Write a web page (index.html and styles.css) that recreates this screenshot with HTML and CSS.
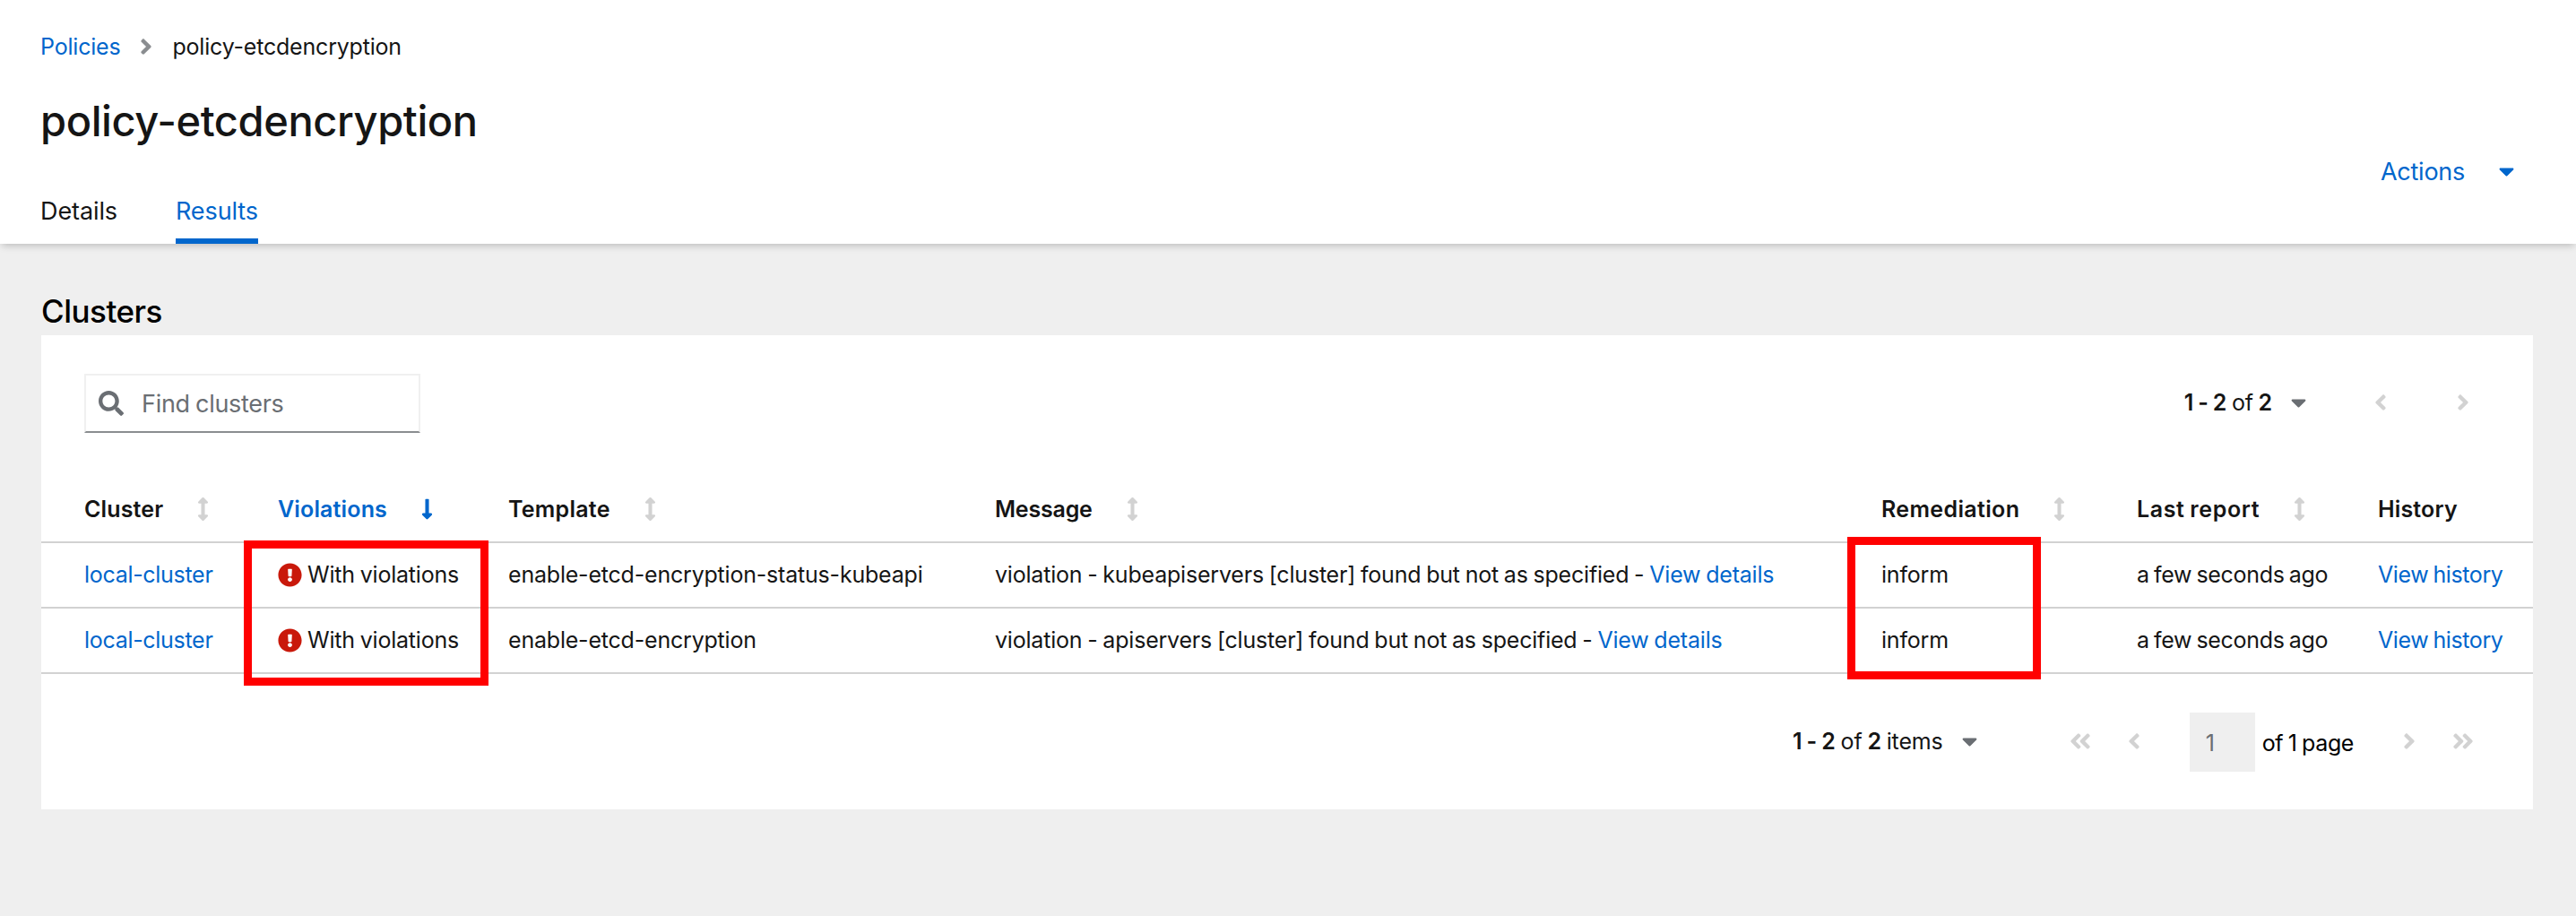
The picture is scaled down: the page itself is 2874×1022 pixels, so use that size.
FILE: index.html
```html
<!DOCTYPE html>
<html lang="en">
<head>
<meta charset="utf-8">
<title>policy-etcdencryption</title>
<link rel="stylesheet" href="styles.css">
</head>
<body>
<svg class="sprite" aria-hidden="true">
  <symbol id="sort" viewBox="0 0 256 512"><path d="M214.059 377.941H168V134.059h46.059c21.382 0 32.09-25.851 16.971-40.971L144.971 7.029c-9.373-9.373-24.568-9.373-33.941 0L24.971 93.088c-15.119 15.119-4.411 40.971 16.971 40.971H88v243.882H41.941c-21.382 0-32.09 25.851-16.971 40.971l86.059 86.059c9.373 9.373 24.568 9.373 33.941 0l86.059-86.059c15.12-15.119 4.412-40.971-16.97-40.971z"/></symbol>
  <symbol id="down" viewBox="0 0 256 512"><path d="M168 345.941V44c0-6.627-5.373-12-12-12h-56c-6.627 0-12 5.373-12 12v301.941H41.941c-21.382 0-32.09 25.851-16.971 40.971l86.059 86.059c9.373 9.373 24.569 9.373 33.941 0l86.059-86.059c15.119-15.119 4.411-40.971-16.971-40.971H168z"/></symbol>
  <symbol id="alert" viewBox="0 0 512 512"><path d="M504 256c0 136.997-111.043 248-248 248S8 392.997 8 256C8 119.083 119.043 8 256 8s248 111.083 248 248zm-248 50c-25.405 0-46 20.595-46 46s20.595 46 46 46 46-20.595 46-46-20.595-46-46-46zm-43.673-165.346l7.418 136c.347 6.364 5.609 11.346 11.982 11.346h48.546c6.373 0 11.635-4.982 11.982-11.346l7.418-136c.375-6.874-5.098-12.654-11.982-12.654h-63.383c-6.884 0-12.356 5.78-11.981 12.654z"/></symbol>
  <symbol id="search" viewBox="0 0 512 512"><path d="M505 442.7L405.3 343c-4.5-4.5-10.6-7-17-7H372c27.6-35.3 44-79.7 44-128C416 93.1 322.9 0 208 0S0 93.1 0 208s93.1 208 208 208c48.3 0 92.7-16.4 128-44v16.3c0 6.4 2.5 12.5 7 17l99.7 99.7c9.4 9.4 24.6 9.4 33.9 0l28.3-28.3c9.4-9.4 9.4-24.6.1-34zM208 336c-70.7 0-128-57.2-128-128 0-70.7 57.2-128 128-128 70.7 0 128 57.2 128 128 0 70.7-57.2 128-128 128z"/></symbol>
  <symbol id="caret" viewBox="0 0 320 512"><path d="M31.3 192h257.3c17.8 0 26.7 21.5 14.1 34.1L174.1 354.7c-7.8 7.8-20.5 7.8-28.3 0L17.2 226.1C4.6 213.5 13.5 192 31.3 192z"/></symbol>
  <symbol id="angle" viewBox="0 0 256 512"><path d="M224.3 273l-136 136c-9.4 9.4-24.6 9.4-33.9 0l-22.6-22.6c-9.4-9.4-9.4-24.6 0-33.9l96.4-96.4-96.4-96.4c-9.4-9.4-9.4-24.6 0-33.9L54.3 103c9.4-9.4 24.6-9.4 33.9 0l136 136c9.5 9.4 9.5 24.6.1 34z"/></symbol>
  <symbol id="angles" viewBox="0 0 448 512"><path id="a" d="M224.3 273l-136 136c-9.4 9.4-24.6 9.4-33.9 0l-22.6-22.6c-9.4-9.4-9.4-24.6 0-33.9l96.4-96.4-96.4-96.4c-9.4-9.4-9.4-24.6 0-33.9L54.3 103c9.4-9.4 24.6-9.4 33.9 0l136 136c9.5 9.4 9.5 24.6.1 34z"/><use href="#a" x="192"/></symbol>
</svg>

<header class="page-header">
  <div class="heading">
    <nav class="breadcrumb">
      <a href="#">Policies</a>
      <svg class="angle"><use href="#angle"/></svg>
      <span>policy-etcdencryption</span>
    </nav>
    <h1>policy-etcdencryption</h1>
    <nav class="tabs">
      <a class="tab" href="#">Details</a>
      <a class="tab active" href="#">Results</a>
    </nav>
  </div>
  <button class="actions" type="button">Actions <svg class="caret"><use href="#caret"/></svg></button>
</header>

<main>
  <h2>Clusters</h2>
  <section class="card">
    <div class="toolbar">
      <div class="search"><svg><use href="#search"/></svg><span>Find clusters</span></div>
      <div class="pager">
        <span class="count"><b>1 - 2</b> of <b>2</b></span>
        <svg class="caret"><use href="#caret"/></svg>
        <svg class="angle prev"><use href="#angle"/></svg>
        <svg class="angle next"><use href="#angle"/></svg>
      </div>
    </div>

    <div class="results">
      <table>
        <colgroup><col class="c1"><col class="c2"><col class="c3"><col class="c4"><col class="c5"><col class="c6"><col></colgroup>
        <thead>
          <tr>
            <th>Cluster<svg class="sort"><use href="#sort"/></svg></th>
            <th class="sorted">Violations<svg class="sort"><use href="#down"/></svg></th>
            <th class="w1">Template<svg class="sort"><use href="#sort"/></svg></th>
            <th class="w0">Message<svg class="sort"><use href="#sort"/></svg></th>
            <th class="w2">Remediation<svg class="sort"><use href="#sort"/></svg></th>
            <th class="w3">Last report<svg class="sort"><use href="#sort"/></svg></th>
            <th>History</th>
          </tr>
        </thead>
        <tbody>
          <tr>
            <td><a href="#">local-cluster</a></td>
            <td><svg class="alert"><use href="#alert"/></svg>With violations</td>
            <td>enable-etcd-encryption-status-kubeapi</td>
            <td>violation - kubeapiservers [cluster] found but not as specified - <a href="#">View details</a></td>
            <td>inform</td>
            <td class="report">a few seconds ago</td>
            <td class="history"><a href="#">View history</a></td>
          </tr>
          <tr>
            <td><a href="#">local-cluster</a></td>
            <td><svg class="alert"><use href="#alert"/></svg>With violations</td>
            <td>enable-etcd-encryption</td>
            <td>violation - apiservers [cluster] found but not as specified - <a href="#">View details</a></td>
            <td>inform</td>
            <td class="report">a few seconds ago</td>
            <td class="history"><a href="#">View history</a></td>
          </tr>
        </tbody>
      </table>
      <div class="highlight violations"></div>
      <div class="highlight remediation"></div>
    </div>

    <div class="footer pager">
      <span class="count"><b>1 - 2</b> of <b>2</b> items</span>
      <svg class="caret"><use href="#caret"/></svg>
      <svg class="angles first"><use href="#angles"/></svg>
      <svg class="angle back"><use href="#angle"/></svg>
      <span class="page-input">1</span>
      <span class="page-total">of 1 page</span>
      <svg class="angle forward"><use href="#angle"/></svg>
      <svg class="angles last"><use href="#angles"/></svg>
    </div>
  </section>
</main>
</body>
</html>
```
FILE: styles.css
```css
* { box-sizing: border-box; }
body {
  margin: 0;
  min-height: 1022px;
  background: #efefef;
  color: #151515;
  font: 400 25px/40px Inter, "Liberation Sans", sans-serif;
  letter-spacing: -0.2px;
  word-spacing: -1px;
}
a { color: #0066cc; text-decoration: none; }
h1, h2 { margin: 0; font-weight: 500; }
b { font-weight: 600; }
svg { fill: currentColor; flex: none; }
.sprite { position: absolute; width: 0; height: 0; }
.angle { width: 14px; height: 28px; color: #d2d2d2; }
.angles { width: 24px; height: 28px; color: #d2d2d2; }
.caret { width: 17px; height: 28px; }

.page-header {
  position: relative;
  display: flex;
  justify-content: space-between;
  height: 272px;
  padding: 32px 69px 0 45px;
  background: #fff;
  box-shadow: 0 4px 8px -2px rgba(3, 3, 3, 0.22);
}
.heading { display: flex; flex-direction: column; }
.breadcrumb { display: flex; align-items: center; }
.breadcrumb .angle { margin: -1px 22px 0 22px; color: #8a8d90; }
h1 { margin-top: 33px; font-size: 47px; line-height: 60px; letter-spacing: -0.4px; }
.tabs { display: flex; gap: 65px; margin-top: 51px; font-size: 27px; letter-spacing: -0.1px; }
.tab { height: 56px; color: #151515; }
.active { color: #0066cc; border-bottom: 6px solid #0066cc; }
.actions {
  display: flex;
  align-items: center;
  gap: 38px;
  height: 40px;
  margin-top: 140px;
  padding: 0;
  border: 0;
  background: none;
  color: #0066cc;
  font: inherit;
  font-size: 27px;
  letter-spacing: -0.26px;
}
.actions .caret { margin-top: -2px; }

main { padding: 51px 48px 0 46px; }
h2 { height: 51px; color: #000; font-size: 35px; line-height: 48px; letter-spacing: -0.5px; }
.card { height: 529px; background: #fff; }
.toolbar { display: flex; justify-content: space-between; height: 159px; padding: 43px 71px 0 48px; }
.search {
  display: flex;
  align-items: center;
  gap: 20px;
  width: 375px;
  height: 66px;
  padding-left: 14px;
  border: 2px solid #f0f0f0;
  border-bottom-color: #8a8d90;
  color: #6a6e73;
  font-size: 27px;
  letter-spacing: -0.3px;
}
.search svg { width: 28px; height: 28px; }
.search span { padding-top: 2px; }
.pager { display: flex; align-items: center; }
.pager .caret { margin-left: 21px; color: #6a6e73; }
.toolbar .pager { height: 64px; }
.prev { margin-left: 76px; transform: scaleX(-1); }
.next { margin-left: 78px; }

.results { position: relative; }
table { width: 100%; table-layout: fixed; border-collapse: separate; border-spacing: 0; }
.c1 { width: 248px; }
.c2 { width: 257px; }
.c3 { width: 543px; }
.c4 { width: 989px; }
.c5 { width: 285px; }
.c6 { width: 269px; }
th, td {
  height: 73px;
  padding: 0 0 2px 16px;
  border-bottom: 2px solid #d2d2d2;
  text-align: left;
  white-space: nowrap;
  vertical-align: middle;
}
th { font-weight: 600; letter-spacing: 0.15px; }
th:first-child, td:first-child { padding-left: 48px; }
td:first-child { letter-spacing: -0.3px; }
.w0 { letter-spacing: -0.2px; }
.w1 { letter-spacing: 0.25px; }
.w2 { letter-spacing: 0.35px; }
.w3 { letter-spacing: 0.6px; }
.sorted { color: #0066cc; }
.sort { width: 13px; height: 26px; margin-left: 38px; vertical-align: -4px; color: #d2d2d2; }
.sorted .sort { color: #0066cc; }
.alert { width: 27px; height: 27px; margin: 0 6px 0 0; vertical-align: -5px; color: #c9190b; }
.report { letter-spacing: -0.3px; word-spacing: -1.5px; }
.history { letter-spacing: -0.4px; word-spacing: -1.5px; }

.highlight { position: absolute; border: 9px solid #ff0000; }
.violations { left: 226px; top: 70px; width: 273px; height: 162px; }
.remediation { left: 2015px; top: 66px; width: 216px; height: 159px; }

.footer { justify-content: flex-end; height: 151px; padding-right: 66px; }
.footer .count { margin-top: -2px; letter-spacing: -0.15px; }
.footer > svg { margin-top: -1px; }
.first { margin-left: 103px; transform: scaleX(-1); }
.back { margin-left: 41px; transform: scaleX(-1); }
.page-input { width: 73px; height: 66px; margin-left: 55px; padding-left: 18px; background: #efefef; color: #6a6e73; line-height: 68px; }
.page-total { margin: 3px 0 0 8px; color: #000; letter-spacing: -0.4px; word-spacing: -1px; }
.forward { margin-left: 55px; }
.last { margin-left: 41px; }
```
